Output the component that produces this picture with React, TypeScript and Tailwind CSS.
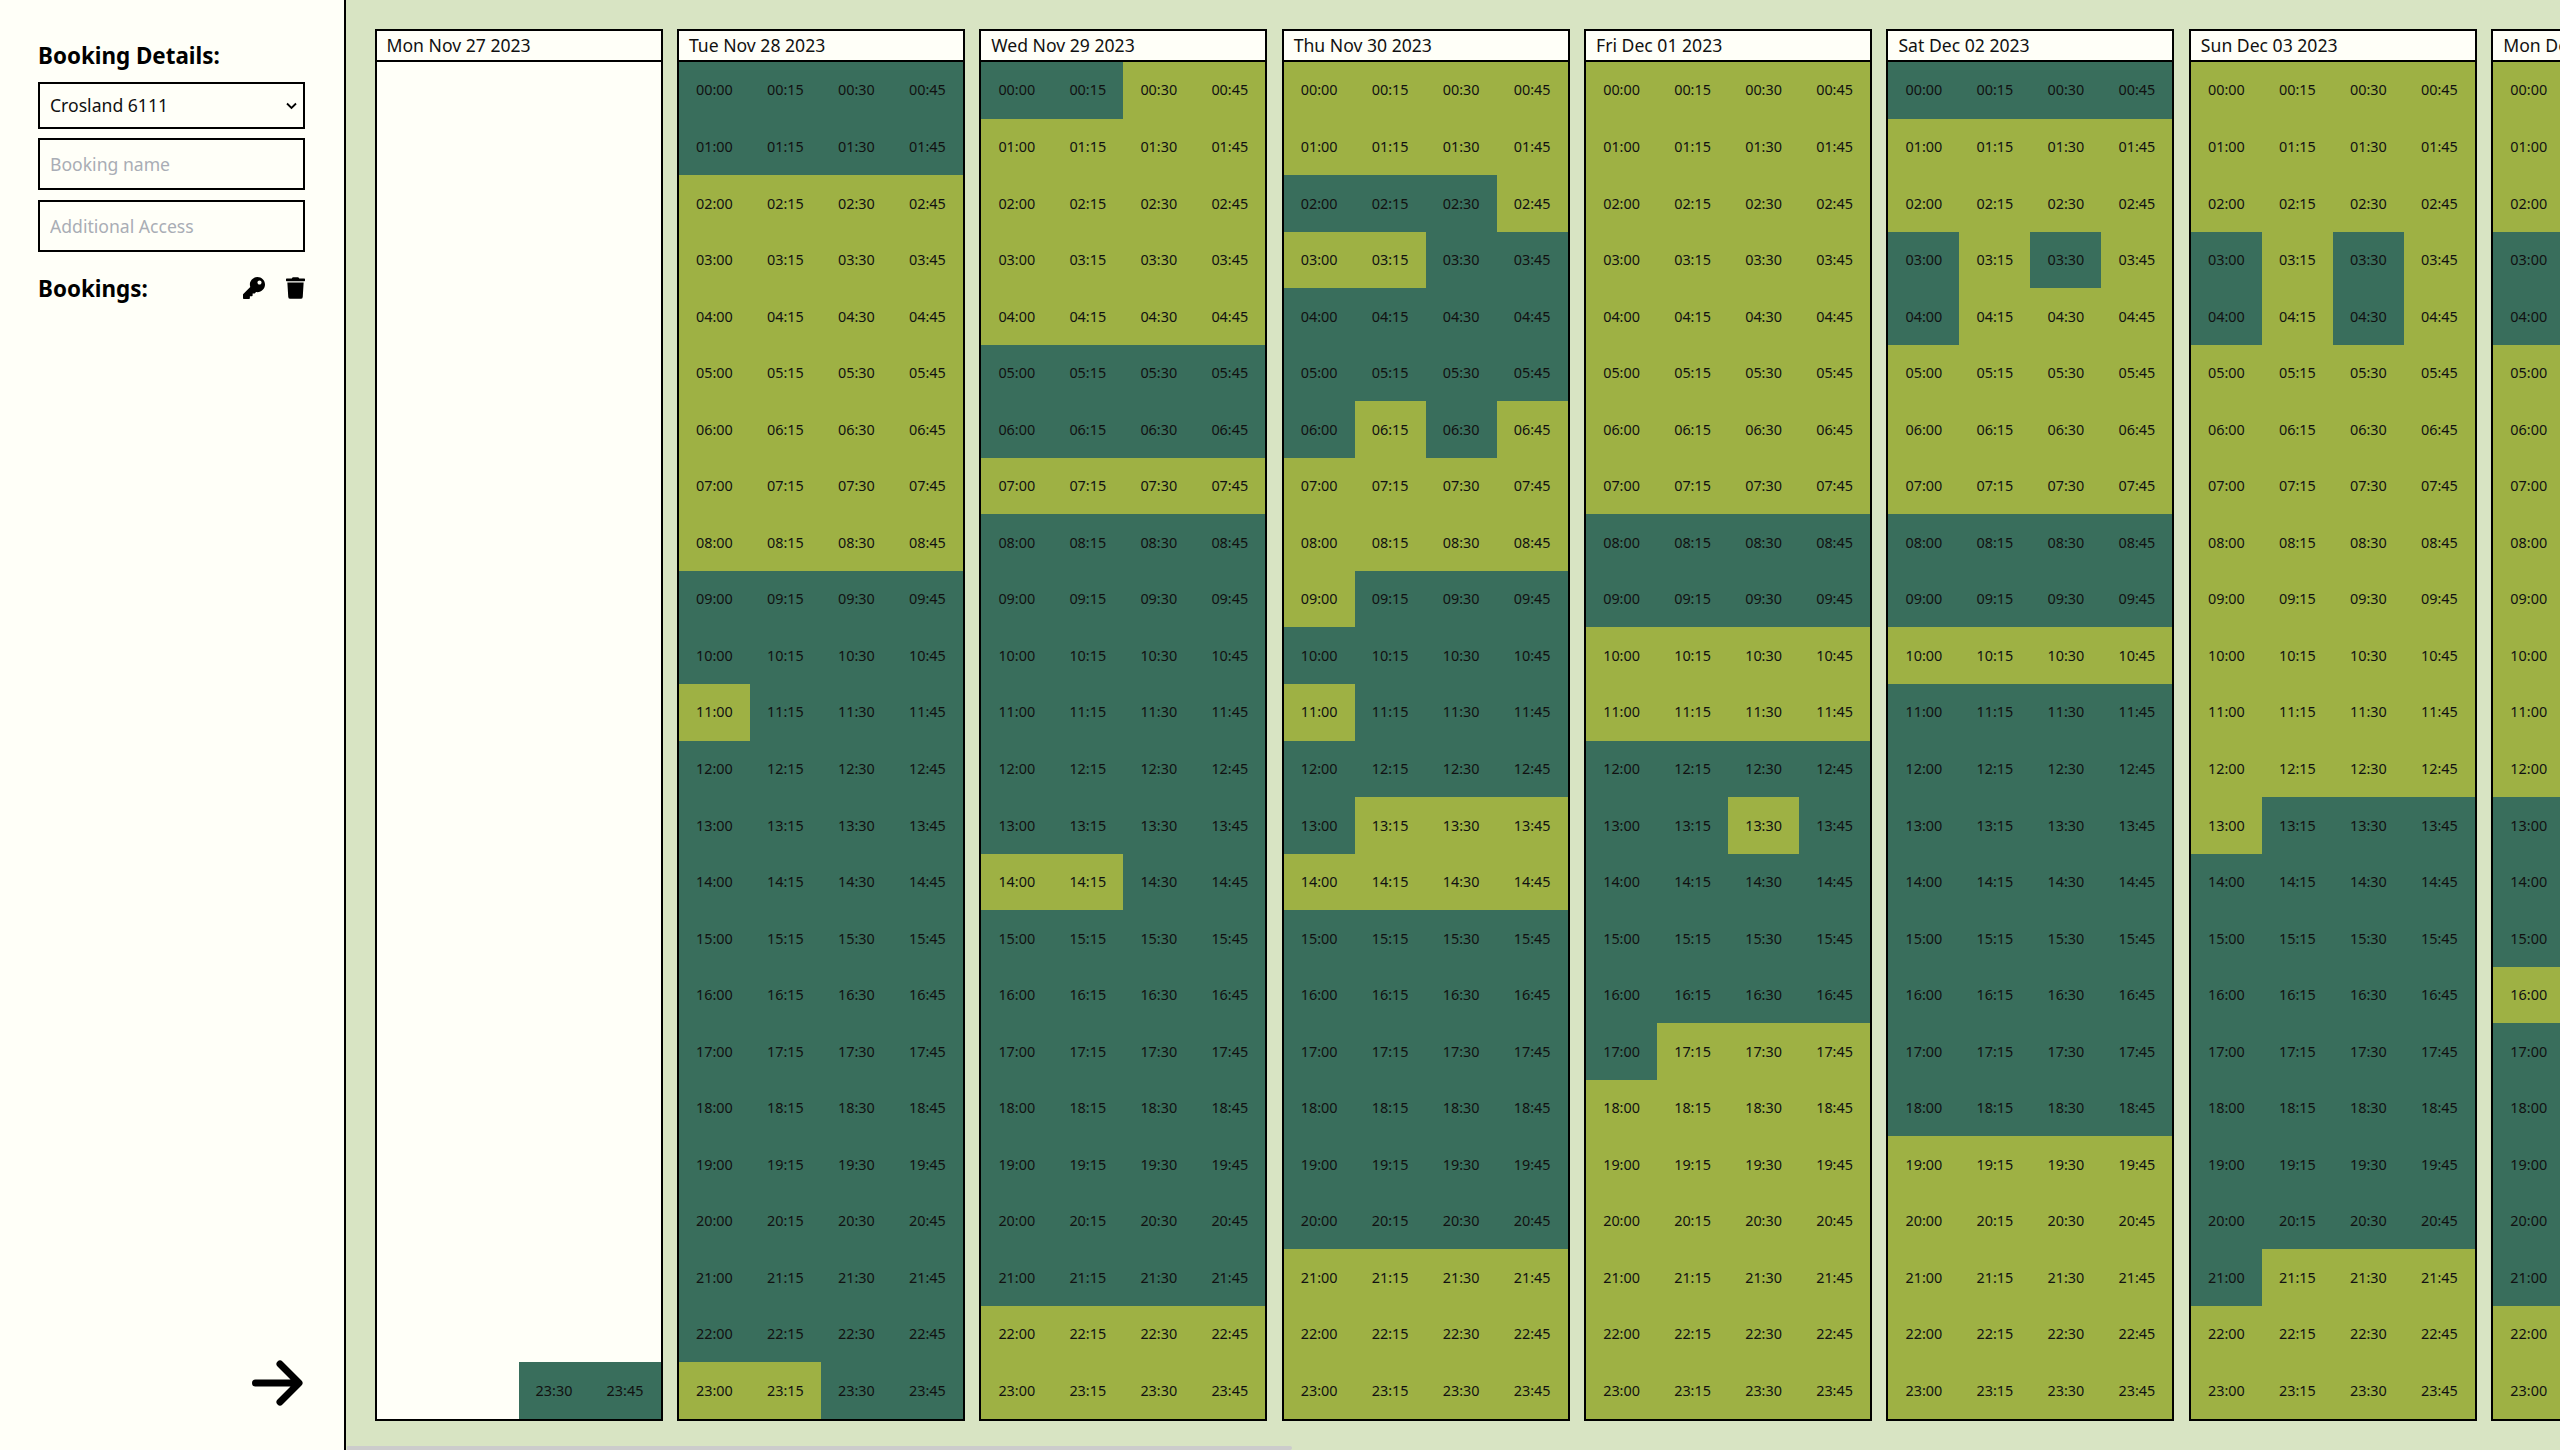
import React from 'react';
import { FaKey, FaTrash } from 'react-icons/fa';

const G = 'GGGG';
const O = 'OOOO';

// one string per hour, four quarters each; G = taken, O = free, . = outside the window
const DAYS: { title: string; rows: string[] }[] = [
  { title: 'Mon Nov 27 2023', rows: [...Array(23).fill('....'), '..GG'] },
  { title: 'Tue Nov 28 2023', rows: [G, G, O, O, O, O, O, O, O, G, G, 'OGGG', G, G, G, G, G, G, G, G, G, G, G, 'OOGG'] },
  { title: 'Wed Nov 29 2023', rows: ['GGOO', O, O, O, O, G, G, O, G, G, G, G, G, G, 'OOGG', G, G, G, G, G, G, G, O, O] },
  { title: 'Thu Nov 30 2023', rows: [O, O, 'GGGO', 'OOGG', G, G, 'GOGO', O, O, 'OGGG', G, 'OGGG', G, 'GOOO', O, G, G, G, G, G, G, O, O, O] },
  { title: 'Fri Dec 01 2023', rows: [O, O, O, O, O, O, O, O, G, G, O, O, G, 'GGOG', G, G, G, 'GOOO', O, O, O, O, O, O] },
  { title: 'Sat Dec 02 2023', rows: [G, O, O, 'GOGO', 'GOOO', O, O, O, G, G, O, G, G, G, G, G, G, G, G, O, O, O, O, O] },
  { title: 'Sun Dec 03 2023', rows: [O, O, O, 'GOGO', 'GOGO', O, O, O, O, O, O, O, O, 'OGGG', G, G, G, G, G, G, G, 'GOOO', O, O] },
  { title: 'Mon Dec 04 2023', rows: [O, O, O, G, G, O, O, O, O, O, O, O, O, G, G, G, O, G, G, G, G, G, O, O] },
];

const pad = (n: number) => String(n).padStart(2, '0');

const DayColumn: React.FC<{ title: string; rows: string[] }> = ({ title, rows }) => (
  <div className="flex h-full w-[288px] shrink-0 flex-col border-2 border-black bg-[#fffff8]">
    <div className="h-[31px] shrink-0 border-b-2 border-black pl-[10px] text-[17.6px] leading-[29px] text-[#111]">{title}</div>
    <div className="grid flex-1 grid-cols-4 grid-rows-[repeat(24,1fr)]">
      {rows.flatMap((row, h) =>
        row.split('').map((state, q) => (
          <div
            key={`${h}-${q}`}
            className={
              state === 'G'
                ? 'flex items-center justify-center bg-[#396e5c] text-[14.4px] text-[#111]'
                : state === 'O'
                  ? 'flex items-center justify-center bg-[#9eb144] text-[14.4px] text-[#111]'
                  : ''
            }
          >
            {state !== '.' && `${pad(h)}:${pad(q * 15)}`}
          </div>
        )),
      )}
    </div>
  </div>
);

export default function App() {
  return (
    <div className="flex h-screen w-screen overflow-hidden bg-[#fffff8] font-['Noto_Sans',sans-serif] text-black">
      <aside className="flex w-[346px] shrink-0 flex-col border-r-2 border-black pt-[39px] pr-[39px] pb-[44px] pl-[38px]">
        <h2 className="text-[22.4px] leading-[34px] font-bold">Booking Details:</h2>
        <div className="relative mt-[9px]">
          <select className="h-[47px] w-full appearance-none border-2 border-black bg-transparent pl-[10px] text-[17.6px] text-[#111]">
            <option>Crosland 6111</option>
          </select>
          <svg className="absolute top-[20px] right-[8px] h-[8px] w-[11px]" viewBox="0 0 11 8" fill="none" stroke="black" strokeWidth="1.8">
            <path d="M1 1.5 L5.5 6 L10 1.5" />
          </svg>
        </div>
        <input placeholder="Booking name" className="mt-[9px] h-[52px] w-full border-2 border-black bg-transparent pl-[10px] text-[17.6px] placeholder:text-[#a9adb5]" />
        <input placeholder="Additional Access" className="mt-[10px] h-[52px] w-full border-2 border-black bg-transparent pl-[10px] text-[17.6px] placeholder:text-[#a9adb5]" />
        <div className="mt-[19px] flex h-[34px] items-center justify-between">
          <h2 className="pt-[2px] text-[22.4px] leading-[34px] font-bold">Bookings:</h2>
          <div className="flex items-center gap-[21px]">
            <FaKey className="h-[22px] w-[22px]" />
            <FaTrash className="h-[22px] w-[19px]" />
          </div>
        </div>
        <div className="mt-auto flex justify-end">
          <svg className="mr-[1px] h-[46px] w-[52px]" viewBox="0 0 52 46" fill="none" stroke="black" strokeWidth="7" strokeLinecap="round" strokeLinejoin="round">
            <path d="M3.5 23 H46 M28 4 L47 23 L28 42" />
          </svg>
        </div>
      </aside>
      <main className="relative min-w-0 flex-1 overflow-hidden bg-[#d8e4c3]">
        <div className="flex h-[1421px] gap-[14.4px] pt-[29px] pl-[28.5px]">
          {DAYS.map((d) => (
            <DayColumn key={d.title} title={d.title} rows={d.rows} />
          ))}
        </div>
        <div className="absolute right-0 bottom-0 left-0 h-[4px]">
          <div className="ml-[1px] h-full w-[945px] rounded-r-full bg-[#cccccc]" />
        </div>
      </main>
    </div>
  );
}
